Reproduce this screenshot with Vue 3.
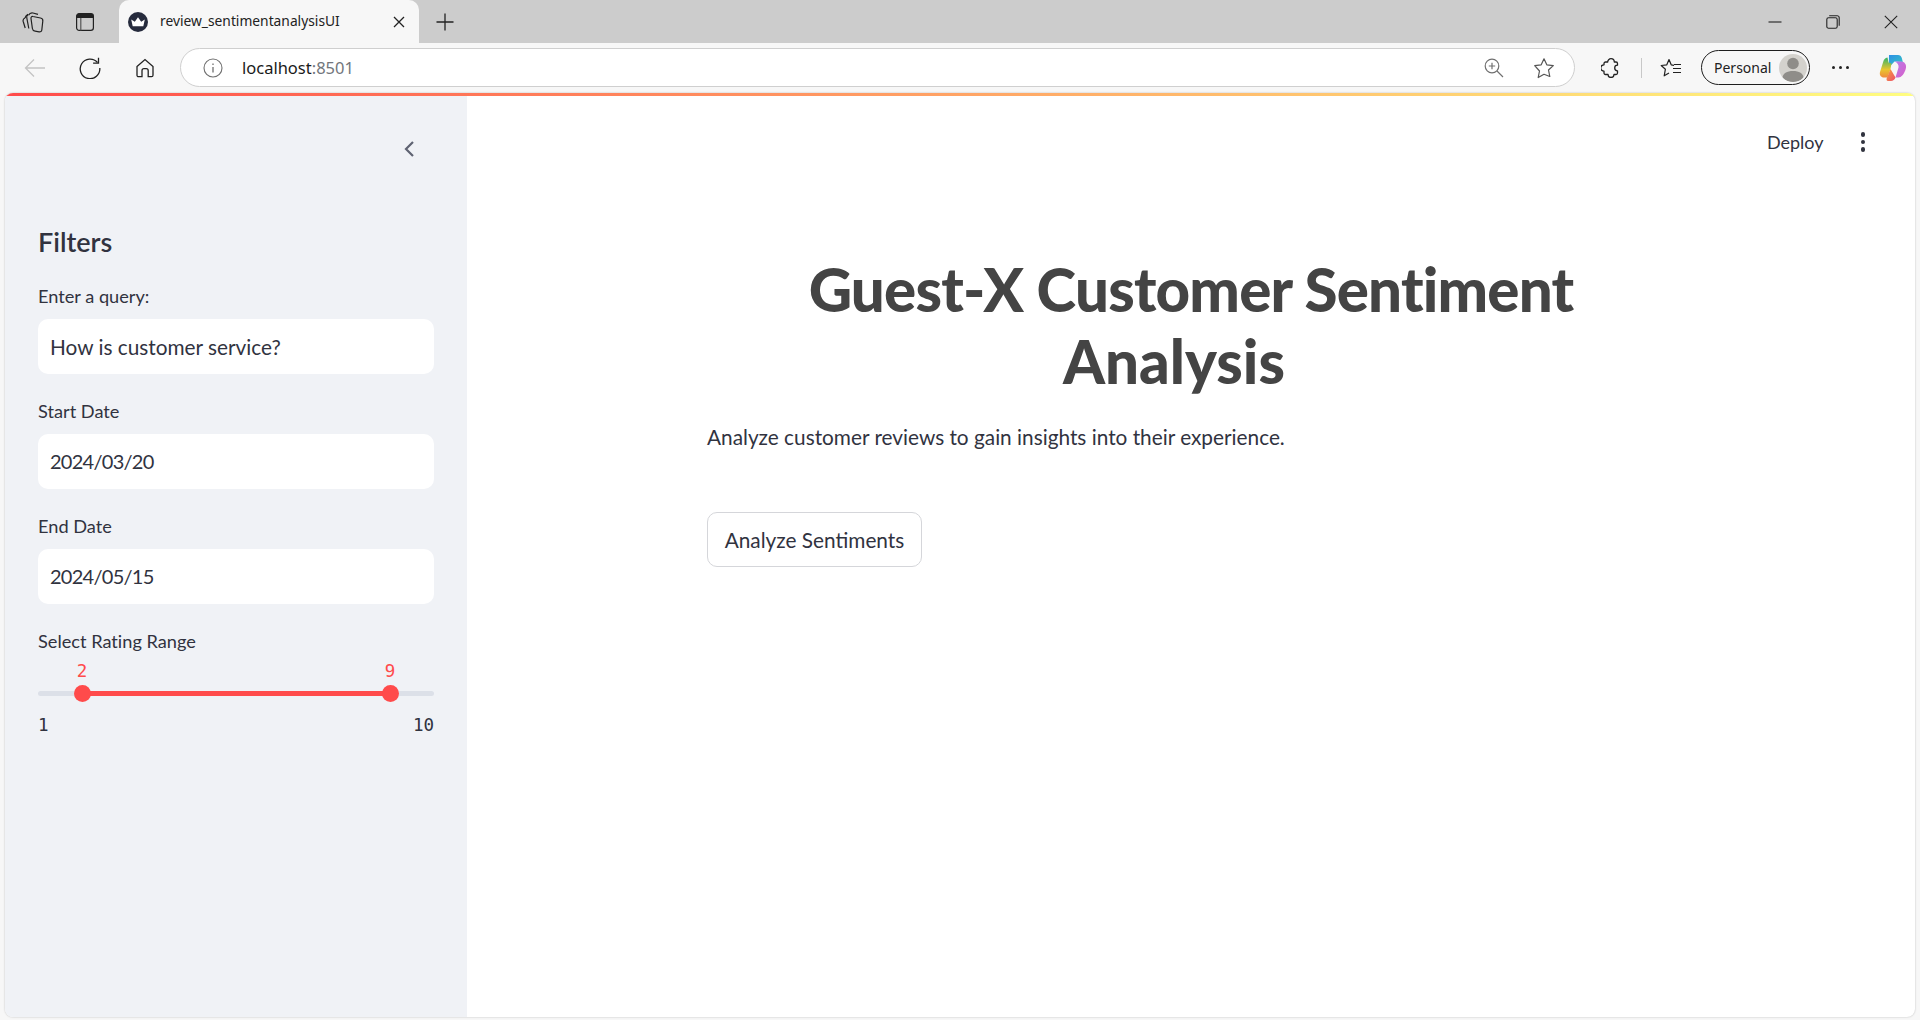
<template>
  <div class="browser">
    <!-- tab strip -->
    <div class="tabstrip">
      <button class="strip-btn first">
        <svg width="22" height="22" viewBox="0 0 22 22" fill="none" stroke="#222" stroke-width="1.2">
          <path d="M3 7C1.500 7.600.8 9 1.200 10.500l2 6.500" />
          <path d="M3 7C3.500 5 4.500 4 6 3.200" />
          <path d="M6 3.500C4.800 4.300 4.400 5.500 4.800 7L6.800 17.500" />
          <path d="M6.500 4.200C7.500 2.400 9 1.600 11 2l5 1.300" />
          <path d="M11 5.500l7.500 1.500c1.500.3 2.500 1.500 2.300 3l-1 9c-.2 1.500-1.300 2-2.700 1.800l-4-.6c-1.500-.2-2.500-1.200-2.700-2.700L9 7.500c-.2-1.500.7-2.300 2-2z" />
        </svg>
      </button>
      <button class="strip-btn second">
        <svg width="20" height="20" viewBox="0 0 20 20" fill="none">
          <rect x="1.600" y="1.600" width="16.800" height="16.800" rx="2.600" stroke="#222" stroke-width="1.200" />
          <path d="M1.600 4.200a2.600 2.600 0 0 1 2.600-2.600h11.600a2.600 2.600 0 0 1 2.600 2.600v1.800H1.600z" fill="#222" />
          <path d="M5.800 6v12.400" stroke="#555" stroke-width="1.200" />
        </svg>
      </button>
      <div class="tab">
        <svg class="favicon" width="20" height="20" viewBox="0 0 20 20">
          <circle cx="10" cy="10" r="10" fill="#262b3d" />
          <path d="M3.200 7.600l3.600 2.200L10 5.200l3.200 4.600 3.600-2.200-1.500 6.600H4.700z" fill="#fff" />
        </svg>
        <span class="tab-title">review_sentimentanalysisUI</span>
        <svg class="tab-close" width="12" height="12" viewBox="0 0 12 12" stroke="#222" stroke-width="1.300">
          <path d="M1 1l10 10M11 1L1 11" />
        </svg>
      </div>
      <button class="strip-btn plus">
        <svg width="18" height="18" viewBox="0 0 18 18" stroke="#222" stroke-width="1.300">
          <path d="M9 0.500v17M0.500 9h17" />
        </svg>
      </button>
      <div class="window-btns">
        <svg width="14" height="14" viewBox="0 0 14 14" stroke="#222" stroke-width="1.100">
          <path d="M0.500 7h13" />
        </svg>
        <svg width="14" height="14" viewBox="0 0 14 14" fill="none" stroke="#222" stroke-width="1.100">
          <rect x="0.800" y="2.800" width="10.400" height="10.400" rx="1.800" />
          <path d="M3.200 0.800h8a2 2 0 0 1 2 2v8" />
        </svg>
        <svg width="14" height="14" viewBox="0 0 14 14" stroke="#222" stroke-width="1.100">
          <path d="M0.800 0.800l12.400 12.400M13.200 0.800L0.800 13.200" />
        </svg>
      </div>
    </div>

    <!-- address bar row -->
    <div class="toolbar">
      <svg class="tool back" width="22" height="22" viewBox="0 0 22 22" fill="none" stroke="#c4c4c4" stroke-width="1.300">
        <path d="M21 11H1.500M10 2.500L1.500 11l8.500 8.500" />
      </svg>
      <svg class="tool reload" width="22" height="22" viewBox="0 0 22 22" fill="none" stroke="#222" stroke-width="1.300">
        <path d="M18.500 5.500A9.800 9.800 0 1 0 20.800 11" />
        <path d="M19.500 0.800v5.400h-5.400" />
      </svg>
      <svg class="tool home" width="20" height="20" viewBox="0 0 20 20" fill="none" stroke="#222" stroke-width="1.300">
        <path d="M2 8.600L10 1.500l8 7.100v8.600a1.500 1.500 0 0 1-1.500 1.500h-3.300v-6a2 2 0 0 0-2-2H9a2 2 0 0 0-2 2v6H3.500A1.500 1.500 0 0 1 2 17.200z" />
      </svg>
      <div class="address">
        <svg width="20" height="20" viewBox="0 0 20 20" fill="none" stroke="#707070" stroke-width="1.100">
          <circle cx="10" cy="10" r="9" />
          <path d="M10 9v5.500M10 5.500v1.500" stroke-width="1.300" />
        </svg>
        <span class="url"><span class="host">localhost</span>:8501</span>
        <svg class="zoom-icon" width="20" height="20" viewBox="0 0 20 20" fill="none" stroke="#707070" stroke-width="1.200">
          <circle cx="8" cy="8" r="6.800" />
          <path d="M13 13l6 6M8 4.800v6.400M4.800 8h6.400" />
        </svg>
        <svg class="star-icon" width="22" height="22" viewBox="0 0 22 22" fill="none" stroke="#555" stroke-width="1.200">
          <path d="M11 1.800l2.800 6 6.500.8-4.800 4.400 1.300 6.500L11 17.300l-5.800 3.200 1.300-6.500L1.700 8.600l6.500-.8z" stroke-linejoin="round" />
        </svg>
      </div>
      <svg class="tool ext" width="20" height="20" viewBox="0 0 20 20" fill="none" stroke="#222" stroke-width="1.300">
        <path d="M4.500 4H6.700A3.300 3.300 0 0 1 13.300 4H15a1.500 1.500 0 0 1 1.500 1.500V7.200A2.800 2.800 0 0 0 16.500 12.800V15A1.500 1.500 0 0 1 15 16.500H13A3 3 0 0 1 7 16.500H4.500A1.500 1.500 0 0 1 3 15V13.200A3.200 3.200 0 0 1 3 6.800V5.500A1.500 1.500 0 0 1 4.500 4Z" stroke-linejoin="round" />
      </svg>
      <span class="divider"></span>
      <svg class="tool fav" width="22" height="20" viewBox="0 0 22 20" fill="none" stroke="#222" stroke-width="1.200">
        <path d="M14 7.300L11.200 6.800 9 1.500 6.800 6.800 1.200 7.500 5.400 11.200 4.200 17.800 9 15" stroke-linejoin="round" />
        <path d="M14 6.500h7M13 10.500h8M13 14.500h8" />
      </svg>
      <div class="profile">
        <span class="profile-name">Personal</span>
        <span class="avatar">
          <svg width="28" height="28" viewBox="0 0 28 28">
            <circle cx="14" cy="9.500" r="5.800" fill="#8f8d89" />
            <path d="M3.500 24c0-4.800 4.500-7 10.500-7s10.500 2.200 10.500 7c-2.500 2.500-6 4-10.500 4s-8-1.500-10.500-4z" fill="#8f8d89" />
          </svg>
        </span>
      </div>
      <span class="more"><i></i><i></i><i></i></span>
      <svg class="copilot" width="28" height="28" viewBox="0 0 28 28">
        <defs>
          <linearGradient id="cpA" x1="0" y1="0" x2="1" y2="1">
            <stop offset="0" stop-color="#2e8fe8" />
            <stop offset="1" stop-color="#35c6c0" />
          </linearGradient>
          <linearGradient id="cpB" x1="0" y1="0" x2="0" y2="1">
            <stop offset="0" stop-color="#30b36b" />
            <stop offset="0.600" stop-color="#e8c52f" />
            <stop offset="1" stop-color="#f08b3c" />
          </linearGradient>
          <linearGradient id="cpC" x1="0" y1="0" x2="1" y2="1">
            <stop offset="0" stop-color="#b77de8" />
            <stop offset="1" stop-color="#d85ec9" />
          </linearGradient>
          <linearGradient id="cpD" x1="0" y1="0" x2="1" y2="1">
            <stop offset="0" stop-color="#f6a33a" />
            <stop offset="1" stop-color="#ee4f6a" />
          </linearGradient>
        </defs>
        <path d="M10 1h9c2 0 3.200 1.200 3.800 3l1 4-8.300-.5-3.300 3.500-2.400-.5z" fill="url(#cpA)" />
        <path d="M8.500 3.500C6 4 5 5.500 4.300 7.500L1 18c-.8 3 1 5.500 4 5.500h3.500l3-8.500 1-5.500-3-1z" fill="url(#cpB)" />
        <path d="M15.500 7.500H22c3.500 0 5.500 3 5 6-.6 4-3 8-5.500 9.500-1 .6-3 .6-5 .6l3-10c.5-2.500-1-5-4-6.100z" fill="url(#cpC)" />
        <path d="M11.500 15l5 8.600c-.8 2-2.500 3.400-4.500 3.400H9c-1.500 0-1.800-1.500-1.200-3z" fill="url(#cpD)" />
      </svg>
    </div>

    <!-- streamlit page -->
    <div class="page">
      <div class="loading-bar"></div>
      <div class="page-body">
        <aside class="sidebar">
          <svg class="collapse" width="12" height="18" viewBox="0 0 12 18" fill="none" stroke="#5f6372" stroke-width="2.200">
            <path d="M10 2L3 9l7 7" />
          </svg>
          <h2 class="filters">Filters</h2>
          <div v-for="field in fields" :key="field.label" class="field">
            <label class="field-label">{{ field.label }}</label>
            <div class="field-input" :class="{ 'is-date': field.date }">{{ field.value }}</div>
          </div>
          <label class="field-label">Select Rating Range</label>
          <div class="slider">
            <div class="slider-track"></div>
            <div class="slider-fill" :style="{ left: pos(range[0]) + 'px', width: pos(range[1]) - pos(range[0]) + 'px' }"></div>
            <template v-for="val in range" :key="val">
              <span class="thumb" :style="{ left: pos(val) + 'px' }"></span>
              <span class="thumb-val" :style="{ left: pos(val) + 'px' }">{{ val }}</span>
            </template>
          </div>
          <div class="ticks"><span>1</span><span>10</span></div>
        </aside>

        <main class="main">
          <div class="main-head">
            <span class="deploy">Deploy</span>
            <span class="kebab"><i></i><i></i><i></i></span>
          </div>
          <div class="content">
            <h1 class="title">
              <span class="line-one">Guest-X Customer Sentiment</span>
              <span class="line-two">Analysis</span>
            </h1>
            <p class="subtitle">Analyze customer reviews to gain insights into their experience.</p>
            <button class="analyze">Analyze Sentiments</button>
          </div>
        </main>
      </div>
    </div>
  </div>
</template>

<script setup>
const fields = [
  { label: 'Enter a query:', value: 'How is customer service?' },
  { label: 'Start Date', value: '2024/03/20', date: true },
  { label: 'End Date', value: '2024/05/15', date: true },
]

const range = [2, 9]

// slider scale: value 1..10 mapped on the 396px track
const pos = (val) => (val - 1) * 44
</script>

<style>
html,
body {
  margin: 0;
  background: #f7f7f7;
}
</style>

<style scoped>
.browser {
  width: 1920px;
  height: 1020px;
  display: flex;
  flex-direction: column;
  background: #f7f7f7;
  overflow: hidden;
  font-family: "Noto Sans", sans-serif;
  font-variant-ligatures: none;
}

button {
  border: none;
  background: none;
  padding: 0;
  font-family: inherit;
}

/* tab strip */
.tabstrip {
  height: 43px;
  background: #cccccc;
  display: flex;
  align-items: center;
  flex-shrink: 0;
}

.strip-btn {
  display: flex;
  align-items: center;
  justify-content: center;
}

.first {
  margin-left: 22px;
}

.second {
  margin-left: 31px;
}

.tab {
  width: 300px;
  height: 43px;
  margin-left: 24px;
  background: #f7f7f7;
  border-radius: 10px 10px 0 0;
  display: flex;
  align-items: center;
  padding: 0 14px 0 9px;
  box-sizing: border-box;
}

.favicon {
  margin-right: 12px;
  flex-shrink: 0;
}

.tab-title {
  flex: 1;
  font-size: 13.800px;
  color: #222;
  white-space: nowrap;
  margin-bottom: 2px;
}

.plus {
  margin-left: 17px;
}

.window-btns {
  margin-left: auto;
  margin-right: 22px;
  display: flex;
  gap: 44px;
  align-items: center;
}

/* toolbar */
.toolbar {
  height: 50px;
  box-sizing: border-box;
  padding-bottom: 1px;
  display: flex;
  align-items: center;
  flex-shrink: 0;
  background: #f7f7f7;
}

.tool {
  flex-shrink: 0;
}

.back {
  margin-left: 24px;
}

.reload {
  margin-left: 33px;
}

.home {
  margin-left: 34px;
}

.address {
  width: 1395px;
  height: 39px;
  margin-left: 25px;
  box-sizing: border-box;
  background: #fff;
  border: 1px solid #cfcfcf;
  border-radius: 20px;
  display: flex;
  align-items: center;
  padding: 0 19px 0 22px;
}

.url {
  margin-left: 19px;
  font-size: 16.500px;
  color: #72767c;
}

.host {
  color: #1a1a1a;
}

.zoom-icon {
  margin-left: auto;
}

.star-icon {
  margin-left: 29px;
}

.ext {
  margin-left: 26px;
}

.divider {
  width: 1px;
  height: 20px;
  background: #c8c8c8;
  margin-left: 20px;
  margin-right: 18px;
}

.profile {
  margin-left: 19px;
  width: 109px;
  height: 35px;
  box-sizing: border-box;
  border: 1.500px solid #1e1e1e;
  border-radius: 18px;
  display: flex;
  align-items: center;
  justify-content: space-between;
  padding: 0 2px 0 12px;
}

.profile-name {
  font-size: 14px;
  color: #222;
}

.avatar {
  width: 28px;
  height: 28px;
  border-radius: 50%;
  background: #d4d2cd;
  overflow: hidden;
  display: flex;
}

.more {
  margin-left: 22px;
  display: flex;
  gap: 4px;
}

.more i {
  width: 3px;
  height: 3px;
  border-radius: 50%;
  background: #222;
}

.copilot {
  margin-left: 30px;
}

/* page */
.page {
  flex: 1;
  margin: 0 5px 3px 5px;
  display: flex;
  flex-direction: column;
  background: #fff;
  border-radius: 8px;
  overflow: hidden;
  box-shadow: 0 0 2px rgba(0, 0, 0, 0.25);
}

.loading-bar {
  height: 3px;
  flex-shrink: 0;
  background: linear-gradient(90deg, #ff4b4b, #fffd80);
}

.page-body {
  flex: 1;
  display: flex;
  min-height: 0;
}

.sidebar {
  width: 462px;
  flex-shrink: 0;
  box-sizing: border-box;
  background: #f0f2f6;
  padding: 128px 33px 0 33px;
  position: relative;
  font-family: Lato, sans-serif;
  color: #31333f;
}

.collapse {
  position: absolute;
  top: 44px;
  left: 398px;
}

.filters {
  margin: 0 0 24px;
  font-size: 27px;
  line-height: 36px;
  font-weight: 600;
}

.field {
  margin-bottom: 25px;
}

.field-label {
  display: block;
  font-size: 18.200px;
  line-height: 24px;
  margin-bottom: 11px;
}

.field-input {
  height: 55px;
  box-sizing: border-box;
  background: #fff;
  border-radius: 10px;
  padding: 0 12px 1px;
  display: flex;
  align-items: center;
  font-size: 20.800px;
}

.field-input.is-date {
  font-size: 20px;
  letter-spacing: -0.730px;
}

.slider {
  position: relative;
  height: 38px;
  margin-top: -4px;
}

.slider-track {
  position: absolute;
  left: 0;
  right: 0;
  top: 31px;
  height: 5px;
  border-radius: 3px;
  background: #dce0e8;
}

.slider-fill {
  position: absolute;
  top: 31px;
  height: 5px;
  background: #ff4b4b;
}

.thumb {
  position: absolute;
  top: 25px;
  width: 17px;
  height: 17px;
  margin-left: -8.500px;
  border-radius: 50%;
  background: #ff4b4b;
}

.thumb-val {
  position: absolute;
  top: 0;
  transform: translateX(-50%);
  font-family: "DejaVu Sans Mono", monospace;
  font-size: 17.500px;
  line-height: 22px;
  color: #ff4b4b;
}

.ticks {
  display: flex;
  justify-content: space-between;
  font-family: "DejaVu Sans Mono", monospace;
  font-size: 17.500px;
  line-height: 22px;
  margin-top: 16px;
}

.main {
  flex: 1;
  min-width: 0;
  font-family: Lato, sans-serif;
  color: #31333f;
}

.main-head {
  height: 57px;
  padding-top: 35px;
  box-sizing: border-box;
  display: flex;
  align-items: center;
  justify-content: flex-end;
  padding-right: 50px;
}

.deploy {
  font-size: 18px;
  margin-right: 37px;
}

.kebab {
  display: flex;
  flex-direction: column;
  gap: 3px;
}

.kebab i {
  width: 4.500px;
  height: 4.500px;
  border-radius: 50%;
  background: #31333f;
}

.content {
  margin: 0 240px;
  padding-top: 100px;
}

.title {
  margin: 0;
  font-size: 60px;
  line-height: 72px;
  font-weight: 900;
  color: #444444;
  text-align: center;
}

.line-one,
.line-two {
  display: block;
}

.line-one {
  letter-spacing: -0.800px;
}

.line-two {
  padding-right: 34px;
}

.subtitle {
  margin: 24px 0 0;
  font-size: 20.800px;
  line-height: 32px;
}

.analyze {
  margin-top: 59px;
  width: 215px;
  height: 55px;
  background: #fff;
  border: 1px solid #d5d6da;
  border-radius: 10px;
  font-family: inherit;
  font-size: 20.800px;
  color: #31333f;
  display: block;
}
</style>
